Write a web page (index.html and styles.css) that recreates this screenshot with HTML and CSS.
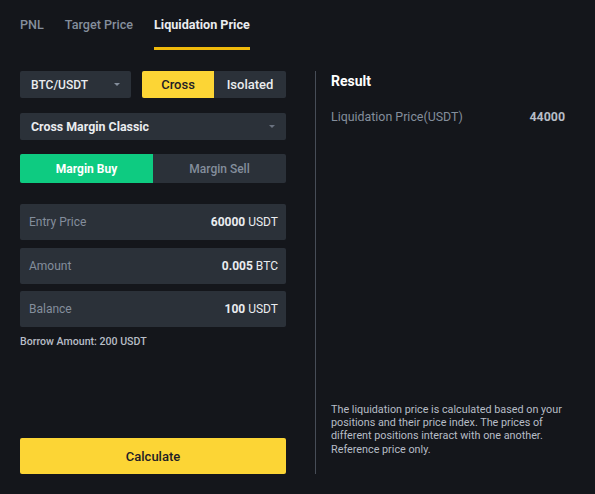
FILE: index.html
```html
<!DOCTYPE html>
<html>
<head>
<meta charset="utf-8">
<link rel="stylesheet" href="styles.css">
</head>
<body>
<div class="page">
  <nav class="tabs">
    <span class="tab">PNL</span>
    <span class="tab">Target Price</span>
    <span class="tab active">Liquidation Price</span>
  </nav>
  <div class="main">
    <div class="left">
      <div class="row">
        <div class="select small">
          <span>BTC/USDT</span>
          <span class="caret"></span>
        </div>
        <div class="toggle">
          <span class="opt cross">Cross</span>
          <span class="opt">Isolated</span>
        </div>
      </div>
      <div class="select wide">
        <span>Cross Margin Classic</span>
        <span class="caret dim"></span>
      </div>
      <div class="side">
        <span class="buy">Margin Buy</span>
        <span class="sell">Margin Sell</span>
      </div>
      <div class="fields">
        <div class="field"><span class="label">Entry Price</span><span class="val"><b>60000</b> USDT</span></div>
        <div class="field"><span class="label">Amount</span><span class="val"><b>0.005</b> BTC</span></div>
        <div class="field"><span class="label">Balance</span><span class="val"><b>100</b> USDT</span></div>
      </div>
      <div class="borrow">Borrow Amount: 200 USDT</div>
      <div class="spacer"></div>
      <button class="calc">Calculate</button>
    </div>
    <div class="right">
      <h2 class="result">Result</h2>
      <div class="resrow"><span>Liquidation Price(USDT)</span><span class="num">44000</span></div>
      <div class="spacer"></div>
      <p class="note">The liquidation price is calculated based on your positions and their price index. The prices of different positions interact with one another. Reference price only.</p>
    </div>
  </div>
</div>
</body>
</html>
```
FILE: styles.css
```css
* { box-sizing: border-box; }
html, body { margin: 0; padding: 0; background: #14161b; }
body { font-family: Roboto, "Liberation Sans", sans-serif; color: #eaecef; width: 595px; height: 494px; overflow: hidden; }
.page { padding: 0 20px 0 20px; }
.tabs { display: flex; gap: 21px; height: 50px; align-items: flex-start; }
.tab { font-size: 12.6px; font-weight: 500; color: #848e9c; padding-top: 17px; height: 50px; }
.tab.active { color: #eaecef; font-weight: 700; border-bottom: 3px solid #f0b90b; }
.main { display: flex; padding-top: 21px; }
.left { width: 266px; height: 403px; display: flex; flex-direction: column; }
.row { display: flex; justify-content: space-between; height: 27px; }
.select { background: #2b3139; border-radius: 2px; display: flex; align-items: center; justify-content: space-between; padding: 0 11px; font-size: 12px; font-weight: 500; color: #eaecef; }
.select.small { width: 111px; }
.select.wide { margin-top: 15px; height: 27px; font-weight: 700; font-size: 12.4px; }
.caret { width: 0; height: 0; border-left: 3px solid transparent; border-right: 3px solid transparent; border-top: 3px solid #848e9c; }
.caret.dim { border-top-color: #6a7280; }
.toggle { display: flex; width: 144px; background: #2b3139; border-radius: 2px; overflow: hidden; }
.opt { flex: 1; display: flex; align-items: center; justify-content: center; font-size: 13px; font-weight: 500; color: #eaecef; }
.opt.cross { background: #fcd535; color: #1e2026; }
.side { margin-top: 14px; height: 29px; display: flex; background: #2b3139; border-radius: 2px; overflow: hidden; }
.side span { flex: 1; display: flex; align-items: center; justify-content: center; font-size: 12px; }
.buy { background: #0ecb81; color: #fff; font-weight: 700; max-width: 133px; }
.sell { color: #848e9c; font-weight: 500; }
.fields { margin-top: 21px; display: flex; flex-direction: column; gap: 7.5px; }
.field { height: 36px; background: #2b3139; border-radius: 2px; display: flex; align-items: center; justify-content: space-between; padding: 0 8px 0 9px; font-size: 12px; }
.label { color: #848e9c; }
.val { color: #eaecef; }
.val b { font-weight: 700; }
.borrow { margin-top: 8px; font-size: 10.6px; font-weight: 500; color: #b7bdc6; }
.spacer { flex: 1; }
.calc { height: 36px; width: 100%; border: none; background: #fcd535; color: #1e2026; border-radius: 2px; font: 500 13px Roboto, "Liberation Sans", sans-serif; }
.right { margin-left: 29px; border-left: 1px solid #474d57; padding-left: 15px; width: 251px; height: 403px; display: flex; flex-direction: column; }
.result { margin: 2px 0 0; font-size: 14px; font-weight: 700; color: #fff; }
.resrow { margin-top: 20px; display: flex; justify-content: space-between; font-size: 12.4px; color: #848e9c; }
.num { font-weight: 700; color: #b7bdc6; margin-right: 1px; }
.note { margin: 0 0 18px; font-size: 10.8px; line-height: 13.3px; color: #b7bdc6; }
```
